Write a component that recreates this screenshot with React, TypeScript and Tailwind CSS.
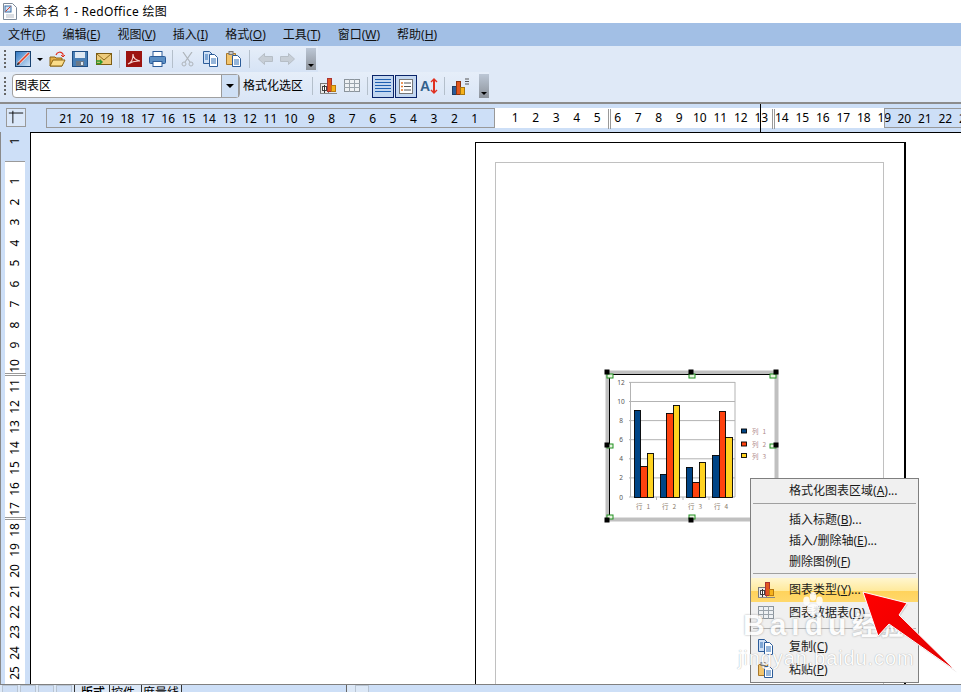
const menus = [
  ["文件", "F"],
  ["编辑", "E"],
  ["视图", "V"],
  ["插入", "I"],
  ["格式", "O"],
  ["工具", "T"],
  ["窗口", "W"],
  ["帮助", "H"],
];

const leftNums = Array.from({ length: 21 }, (_, i) => 21 - i);
const midNums = Array.from({ length: 19 }, (_, i) => i + 1);
const rightNums = [20, 21, 22, 23];
const sideNums = Array.from({ length: 25 }, (_, i) => i + 1);

// bars in screen coordinates: x, width, top
const bars = [
  [634, 6, 410, "#004586"], [640, 7, 466, "#ff420e"], [647, 6, 453, "#ffd320"],
  [660, 6, 474, "#004586"], [666, 7, 413, "#ff420e"], [673, 6, 405, "#ffd320"],
  [686, 6, 467, "#004586"], [692, 7, 482, "#ff420e"], [699, 6, 462, "#ffd320"],
  [712, 7, 455, "#004586"], [719, 6, 411, "#ff420e"], [725, 7, 437, "#ffd320"],
] as const;

function Grip() {
  return <div className="ml-1 h-[18px] w-[2px] shrink-0 border-l-2 border-dotted border-[#666]" />;
}

function Sep({ className }: { className: string }) {
  return <div className={`h-[18px] w-px shrink-0 bg-[#b4bfcb] ${className}`} />;
}

function Overflow({ className }: { className: string }) {
  return (
    <div className={`flex w-[10px] shrink-0 items-end justify-center bg-linear-to-b from-[#bcc7d6] to-[#8d939b] pb-[3px] ${className}`}>
      <div className="h-0 w-0 border-x-[3px] border-t-[3px] border-x-transparent border-t-black" />
    </div>
  );
}

function ChartTypeIcon({ className = "" }: { className?: string }) {
  return (
    <svg viewBox="0 0 17 17" className={`h-[17px] w-[17px] shrink-0 ${className}`}>
      <rect x="0.5" y="5.5" width="8" height="10" fill="#e8e8e8" stroke="#777" />
      <rect x="2.5" y="8.5" width="4" height="4" fill="#fff" stroke="#444" />
      <path d="M4.5 7v8" stroke="#333" />
      <rect x="7.5" y="0.5" width="4" height="13" fill="#e2571e" stroke="#a33" />
      <rect x="11.5" y="7.5" width="4" height="6" fill="#f6b21b" stroke="#b87a10" />
      <path d="M0 15.5h17" stroke="#888" />
    </svg>
  );
}

function TableIcon({ className = "" }: { className?: string }) {
  return (
    <svg viewBox="0 0 16 14" className={`h-[14px] w-4 shrink-0 ${className}`}>
      <rect x="0.5" y="0.5" width="15" height="12" fill="#eef1f4" stroke="#8b949c" />
      <path d="M0 4.5h16M0 8.5h16M5.5 0v13M10.5 0v13" stroke="#9aa3ab" />
    </svg>
  );
}

function CopyIcon({ className = "" }: { className?: string }) {
  return (
    <svg viewBox="0 0 16 16" className={`h-4 w-4 shrink-0 ${className}`}>
      <path d="M0.5 0.5h6l3 3v9h-9z" fill="#cfe0f5" stroke="#2c5c99" />
      <path d="M6.5 3.5h5l3 3v9h-8z" fill="#fff" stroke="#2c5c99" />
      <path d="M8 8h5M8 10h5M8 12h5M2 4h3M2 6h3M2 8h3" stroke="#2c6cb5" />
    </svg>
  );
}

function PasteIcon({ className = "" }: { className?: string }) {
  return (
    <svg viewBox="0 0 16 16" className={`h-4 w-4 shrink-0 ${className}`}>
      <path d="M0.5 2.5h9v11h-9z" fill="#f2c56e" stroke="#a8772a" />
      <rect x="3" y="0.5" width="4" height="3" fill="#c9c9c9" stroke="#777" />
      <path d="M6.5 4.5h5l3 3v8h-8z" fill="#fff" stroke="#2c5c99" />
      <path d="M8 9h5M8 11h5M8 13h5" stroke="#2c6cb5" />
    </svg>
  );
}

function DrawIcon() {
  return (
    <svg viewBox="0 0 16 16" className="ml-[9px] h-4 w-4 shrink-0">
      <defs>
        <linearGradient id="draw-fill" x1="0" y1="0" x2="1" y2="1">
          <stop offset="0" stopColor="#2f78c4" />
          <stop offset="1" stopColor="#d5e6f7" />
        </linearGradient>
      </defs>
      <rect x="0.5" y="0.5" width="15" height="15" fill="url(#draw-fill)" stroke="#17406f" />
      <path d="M3 13 14 2" stroke="#fbe3d8" strokeWidth="3" />
      <path d="M3 13 14 2" stroke="#e2402b" strokeWidth="1.6" />
      <path d="M1.500 14.500 3 11l2 2z" fill="#333" />
    </svg>
  );
}

function OpenIcon() {
  return (
    <svg viewBox="0 0 17 17" className="ml-[6px] h-[17px] w-[17px] shrink-0">
      <path d="M1 6h5l1 1h6v8H1z" fill="#e6b04a" stroke="#8a6414" />
      <path d="M1 15 4 9h12l-3 6z" fill="#fbdd8a" stroke="#8a6414" />
      <path d="M7 4c1-3 5-4 7-1v2" fill="none" stroke="#e03020" strokeWidth="1.2" />
      <path d="m12 4 2 2 2-2" fill="none" stroke="#e03020" />
    </svg>
  );
}

function SaveIcon() {
  return (
    <svg viewBox="0 0 16 16" className="ml-[6px] h-4 w-4 shrink-0">
      <rect x="0.5" y="0.5" width="15" height="15" fill="#4a7fb5" stroke="#1f4f85" />
      <rect x="3" y="1" width="10" height="6" fill="#dfe9f3" />
      <rect x="4" y="10" width="8" height="5" fill="#6d7a88" />
      <rect x="9" y="11" width="2" height="3" fill="#dfe9f3" />
    </svg>
  );
}

function MailIcon() {
  return (
    <svg viewBox="0 0 16 14" className="ml-[8px] h-[14px] w-4 shrink-0">
      <rect x="0.5" y="1.5" width="15" height="11" fill="#edcb7c" stroke="#7d5d14" />
      <path d="m1 2 7 6 7-6" fill="none" stroke="#8f6c1b" />
      <path d="M0 9h5M0 11.5h5" stroke="#2f9a2f" strokeWidth="1.5" />
      <path d="m4 7 3 3-3 3z" fill="#2f9a2f" />
    </svg>
  );
}

function PdfIcon() {
  return (
    <svg viewBox="0 0 16 16" className="ml-[6px] h-4 w-4 shrink-0">
      <rect width="16" height="16" fill="#9c1410" />
      <path d="M2 13c3-1 5-5 5-10 0 4 2 6 7 7-4-.3-8 .5-12 3z" fill="none" stroke="#f6d5d0" strokeWidth="1.1" />
    </svg>
  );
}

function PrintIcon() {
  return (
    <svg viewBox="0 0 17 16" className="ml-[7px] h-4 w-[17px] shrink-0">
      <rect x="4" y="0.5" width="9" height="5" fill="#fff" stroke="#2c5c99" />
      <rect x="0.5" y="5.5" width="16" height="7" rx="1" fill="#5c8fc4" stroke="#2c5c99" />
      <rect x="4" y="10.5" width="9" height="5" fill="#fff" stroke="#2c5c99" />
    </svg>
  );
}

function CutIcon() {
  return (
    <svg viewBox="0 0 13 15" className="ml-[8px] h-[15px] w-[13px] shrink-0">
      <path d="M2 0l7 10M11 0 4 10" stroke="#aeb4ba" strokeWidth="1.2" />
      <circle cx="3" cy="12" r="2" fill="none" stroke="#aeb4ba" />
      <circle cx="10" cy="12" r="2" fill="none" stroke="#aeb4ba" />
    </svg>
  );
}

function ArrowIcon({ flip, className }: { flip?: boolean; className: string }) {
  return (
    <svg viewBox="0 0 15 12" className={`h-3 w-[15px] shrink-0 ${flip ? "-scale-x-100" : ""} ${className}`}>
      <path d="M0.5 6 6.5 0.5v3h8v5h-8v3z" fill="#c7ced6" stroke="#b6bec6" />
    </svg>
  );
}

function LinesIcon() {
  return (
    <svg viewBox="0 0 16 14" className="h-[14px] w-4">
      <path d="M0 .5h16M0 3.5h16M0 6.5h16M0 9.5h16M0 12.5h16" stroke="#1f5fb0" />
    </svg>
  );
}

function ListIcon() {
  return (
    <svg viewBox="0 0 14 15" className="h-[15px] w-[14px]">
      <rect x="0.5" y="0.5" width="13" height="14" fill="#fff" stroke="#777" />
      <path d="M2 4h2M2 7.500h2M2 11h2" stroke="#e2762a" strokeWidth="1.4" />
      <path d="M5 4h7M5 7.500h7M5 11h7" stroke="#555" />
    </svg>
  );
}

function TextAxisIcon() {
  return (
    <svg viewBox="0 0 18 16" className="ml-[3px] h-4 w-[18px] shrink-0">
      <text x="0" y="13" fontSize="14" fontWeight="700" fill="#34618c" fontFamily="Liberation Sans">A</text>
      <path d="M14 1v14" stroke="#e03020" strokeWidth="2" />
      <path d="m11 4 3-3 3 3M11 12l3 3 3-3" fill="none" stroke="#e03020" strokeWidth="1.4" />
    </svg>
  );
}

function BarsIcon() {
  return (
    <svg viewBox="0 0 17 17" className="ml-[7px] h-[17px] w-[17px] shrink-0">
      <rect x="0.5" y="8.5" width="4" height="8" fill="#2c5c99" stroke="#1f3f66" />
      <rect x="4.500" y="3.500" width="4" height="13" fill="#e2571e" stroke="#8e3410" />
      <rect x="8.500" y="9.500" width="4" height="7" fill="#f6b21b" stroke="#a8760e" />
      <path d="M13 1h4M13 3.500h4M13 6h4" stroke="#555" />
    </svg>
  );
}

function SideRuler() {
  return (
    <div className="relative flex w-[30px] shrink-0 justify-center border-l border-[#8a8a8a] bg-[#cddff7] pr-[1px]">
      <div className="w-5 bg-white">
        <div className="flex h-[30px] items-start justify-center border-b border-[#9a9a9a] bg-[#cddff7] pt-px">
          <span className="-rotate-90 text-xs">1</span>
        </div>
        <div className="pt-[9px]">
          {sideNums.map((n) => (
            <div key={n} className="flex h-[20.5px] items-center justify-center">
              <span className="-rotate-90 text-xs">{n}</span>
            </div>
          ))}
        </div>
      </div>
      <div className="absolute left-[4px] top-[241px] h-[3px] w-[21px] border-y border-[#999]" />
      <div className="absolute left-[4px] top-[385px] h-[3px] w-[21px] border-y border-[#999]" />
    </div>
  );
}

function TopRuler() {
  return (
    <div className="relative flex h-[30px] shrink-0 items-center border-t-2 border-[#8c8c8c] bg-[#cddff7] pb-[1px]">
      <svg viewBox="0 0 20 19" className="ml-[6px] h-[19px] w-5 shrink-0 border border-[#999] bg-[#dbe8f9]">
        <path d="M6.500 2v14M2 4.500h16" stroke="#000" />
      </svg>
      <div className="ml-5 flex h-5 w-[449px] shrink-0 justify-end border border-[#999] pr-[9px] text-xs leading-5">
        {leftNums.map((n) => (
          <span key={n} className="w-[20.45px] shrink-0 text-center">{n}</span>
        ))}
      </div>
      <div className="flex h-5 w-[389px] shrink-0 bg-white pl-[10px] text-xs leading-5">
        {midNums.map((n) => (
          <span key={n} className="w-[20.5px] shrink-0 text-center">{n}</span>
        ))}
      </div>
      <div className="flex h-5 flex-1 border border-r-0 border-[#999] pl-[9px] text-xs leading-5">
        {rightNums.map((n) => (
          <span key={n} className="w-[20.5px] shrink-0 text-center">{n}</span>
        ))}
      </div>
      <div className="absolute left-[608px] top-[5px] h-5 w-[3px] border-x border-[#999]" />
      <div className="absolute left-[772px] top-[5px] h-5 w-[3px] border-x border-[#999]" />
      <div className="absolute left-[760px] top-0 h-[28px] w-px bg-black" />
    </div>
  );
}

function ChartObject() {
  const ticks = [0, 2, 4, 6, 8, 10, 12];
  const handles = [[610, 376], [692, 376], [773, 376], [610, 446], [773, 446], [610, 517], [692, 517]];
  const black = [[607, 372], [691, 372], [776, 372], [607, 445], [776, 445], [607, 520], [691, 520]];
  return (
    <svg viewBox="600 367 180 160" className="ml-[104px] mt-[204px] h-[160px] w-[180px]">
      <rect x="607.500" y="372.500" width="169" height="147" fill="#fff" stroke="#c0c0c0" strokeWidth="4" />
      <path d="M609.500 519V374.500H775" fill="none" stroke="#000" />
      {ticks.map((t) => {
        const y = 497 - t * 9.55;
        return (
          <g key={t}>
            <path d={`M629 ${y}H735`} stroke="#b3b3b3" />
            <text x="621" y={y + 2.500} fontSize="6.500" textAnchor="middle" fill="#555">{t}</text>
          </g>
        );
      })}
      <path d="M630.500 382v115M735 382v115M656.500 497v3M683 497v3M709 497v3" stroke="#b3b3b3" />
      {bars.map(([x, w, top, fill]) => (
        <rect key={x} x={x + 0.5} y={top + 0.5} width={w} height={497 - top} fill={fill} stroke="#000" strokeWidth="0.9" />
      ))}
      {["行 1", "行 2", "行 3", "行 4"].map((t, i) => (
        <text key={t} x={643 + i * 26} y="509" fontSize="6.500" wordSpacing="2.500" textAnchor="middle" fill="#8a7a6a" fontFamily="Noto Sans CJK SC">{t}</text>
      ))}
      {[["#004586", 429, "列 1"], ["#ff420e", 442, "列 2"], ["#ffd320", 453.500, "列 3"]].map(([c, y, t]) => (
        <g key={t as string}>
          <rect x="741.500" y={y as number} width="5" height="4" fill={c as string} stroke="#000" strokeWidth="0.9" />
          <text x="752" y={(y as number) + 5} fontSize="6.500" wordSpacing="2.500" fill="#b08a8a" fontFamily="Noto Sans CJK SC">{t as string}</text>
        </g>
      ))}
      {handles.map(([x, y]) => (
        <rect key={`${x}-${y}`} x={x - 3} y={y - 2} width="6" height="4" fill="#e8f5e0" stroke="#1f8f1f" />
      ))}
      {black.map(([x, y]) => (
        <rect key={`${x}-${y}`} x={x - 2.5} y={y - 2.5} width="5" height="5" fill="#000" />
      ))}
    </svg>
  );
}

function MenuLine({ k, label, after = "", className = "h-[21px]", icon }: { k: string; label: string; after?: string; className?: string; icon?: React.ReactNode }) {
  return (
    <div className={`flex items-center text-xs text-[#1a1a1a] ${className}`}>
      <div className="flex w-[38px] shrink-0 justify-center pr-[8px]">{icon}</div>
      <span>
        {label}(<u>{k}</u>){after}
      </span>
    </div>
  );
}

function ContextMenu() {
  return (
    <div className="absolute left-[750px] top-[478px] w-[169px] border border-[#7f7f7f] bg-[#f0f0f0] pt-[1px]">
      <MenuLine label="格式化图表区域" k="A" after="..." />
      <div className="mx-[2px] my-[2px] h-px bg-[#a0a0a0]" />
      <div className="h-[3px]" />
      <MenuLine label="插入标题" k="B" after="..." />
      <MenuLine label="插入/删除轴" k="E" after="..." />
      <MenuLine label="删除图例" k="F" />
      <div className="mx-[2px] my-[1px] h-px bg-[#a0a0a0]" />
      <div className="h-[3px]" />
      <MenuLine
        label="图表类型"
        k="Y"
        after="..."
        className="h-6 bg-[linear-gradient(#fff6cf,#ffe99a_55%,#ffd35c_56%,#ffd86c)]"
        icon={<ChartTypeIcon />}
      />
      <MenuLine label="图表数据表" k="D" className="h-[22px]" icon={<TableIcon />} />
      <div className="mx-[2px] my-[4px] h-px bg-[#b0b0b0]" />
      <div className="h-[3px]" />
      <MenuLine label="复制" k="C" icon={<CopyIcon />} />
      <MenuLine label="粘贴" k="P" className="h-[25px]" icon={<PasteIcon />} />
    </div>
  );
}

function BottomTabs() {
  return (
    <div className="flex h-2 shrink-0 border-t border-[#808080] bg-[#dce8f7] pl-[2px]">
      {[0, 1, 2, 3].map((i) => (
        <div key={i} className="mr-[2px] h-[12px] w-4 shrink-0 border border-[#b8c4d2] bg-[#cfdff5]" />
      ))}
      <div className="flex items-start text-xs leading-4">
        <span className="w-[35px] shrink-0 border-l border-[#333] pl-[6px] font-medium">版式</span>
        <span className="w-[32px] shrink-0 border-l border-[#333] pl-[1px]">控件</span>
        <span className="w-[41px] shrink-0 border-x border-[#333] pl-px">度量线</span>
      </div>
      <div className="w-[165px] shrink-0 border-r border-[#666] bg-[#cddff7]" />
      <div className="ml-[8px] h-3 w-[14px] shrink-0 border border-[#b8c4d2] bg-[#dce8f7]" />
      <div className="flex-1 bg-[#cddff7]" />
    </div>
  );
}

function Watermark() {
  return (
    <div className="pointer-events-none absolute left-[743px] top-[592px] w-[175px] text-white">
      <svg viewBox="0 0 24 22" className="ml-[57px] h-[24px] w-[26px] opacity-85">
        <ellipse cx="6" cy="8" rx="3" ry="4" fill="#fff" />
        <ellipse cx="12" cy="4" rx="3" ry="4" fill="#fff" />
        <ellipse cx="18" cy="8" rx="3" ry="4" fill="#fff" />
        <ellipse cx="12" cy="16" rx="6" ry="5" fill="#fff" />
      </svg>
      <div className="-mt-[8px] flex items-center whitespace-nowrap opacity-85 [text-shadow:0_0_2px_#8a8a8a]">
        <span className="w-[109px] shrink-0 font-['Liberation_Sans',sans-serif] text-[30px] font-bold leading-[34px] tracking-[5px]">Baidu</span>
        <span className="text-[26px] font-bold leading-[34px]">经验</span>
      </div>
      <div className="-ml-[5px] mt-[6px] whitespace-nowrap font-['Liberation_Sans',sans-serif] text-[20px] leading-5 tracking-[0.9px] opacity-85 [text-shadow:0_0_1px_#8a8a8a]">
        jingyan.baidu.com
      </div>
    </div>
  );
}

function RedArrow() {
  return (
    <svg viewBox="855 585 106 95" className="pointer-events-none absolute left-[855px] top-[585px] h-[95px] w-[106px]">
      <defs>
        <linearGradient id="arrow-fill" x1="0" y1="0" x2="1" y2="1">
          <stop offset="0" stopColor="#ff0000" />
          <stop offset="1" stopColor="#e00000" />
        </linearGradient>
      </defs>
      <path d="M863 592 907 603 899 615 956 671 889 624 878 636z" fill="#b8b8b8" opacity="0.5" transform="translate(1 1.500)" />
      <path d="M863 592 907 603 899 615 956 671 889 624 878 636z" fill="url(#arrow-fill)" stroke="#fff" strokeWidth="1" />
    </svg>
  );
}

export default function App() {
  return (
    <div className="relative flex h-[692px] w-full flex-col overflow-hidden bg-white font-['Noto_Sans','Noto_Sans_CJK_SC',sans-serif] text-black">
      {/* title bar */}
      <div className="flex h-[23px] shrink-0 items-center pl-[3px] text-xs">
        <svg viewBox="0 0 14 17" className="h-[17px] w-[14px] shrink-0">
          <path d="M0.5 0.5h9l4 4v12h-13z" fill="#fff" stroke="#7d8a99" />
          <rect x="2" y="3" width="6" height="6" fill="#cfe2f6" stroke="#3a6ea5" />
          <path d="M2.500 8.500 7.500 3.500" stroke="#d8402b" />
          <path d="M3 12h8M3 14h8" stroke="#b5bcc5" />
        </svg>
        <span className="ml-[6px] tracking-[0.3px]">未命名 1 - RedOffice 绘图</span>
      </div>

      {/* menu bar */}
      <div className="flex h-[23px] shrink-0 items-center gap-[17px] bg-[#a2bfe5] pl-2 text-xs text-[#111]">
        {menus.map(([label, key]) => (
          <span key={key}>
            {label}(<u>{key}</u>)
          </span>
        ))}
      </div>

      {/* toolbars */}
      <div className="shrink-0 bg-[#dfe9f7]">
        <div className="flex h-[26px] w-[318px] items-center bg-linear-to-b from-[#e6eef9] to-[#d6e3f5]">
          <Grip />
          <DrawIcon />
          <div className="ml-[6px] h-0 w-0 shrink-0 border-x-[3px] border-t-[3px] border-x-transparent border-t-black" />
          <OpenIcon />
          <SaveIcon />
          <MailIcon />
          <Sep className="ml-[7px]" />
          <PdfIcon />
          <PrintIcon />
          <Sep className="ml-[6px]" />
          <CutIcon />
          <CopyIcon className="ml-[9px]" />
          <PasteIcon className="ml-[7px]" />
          <Sep className="ml-[7px]" />
          <ArrowIcon className="ml-[8px]" />
          <ArrowIcon flip className="ml-[7px]" />
          <Overflow className="ml-[11px] h-[22px]" />
        </div>
        <div className="flex h-[30px] w-[489px] items-center bg-linear-to-b from-[#e6eef9] to-[#d9e5f6] pb-[2px]">
          <Grip />
          <div className="ml-[6px] flex h-[24px] w-[228px] shrink-0 items-center justify-between rounded-sm border border-[#a0a0a0] bg-white pl-[2px] text-xs">
            <span>图表区</span>
            <div className="flex h-[22px] w-[18px] items-center justify-center border-x border-[#9a9a9a] bg-[#cfe0f5]">
              <div className="h-0 w-0 border-x-[4px] border-t-[4px] border-x-transparent border-t-black" />
            </div>
          </div>
          <span className="ml-[3px] w-[60px] shrink-0 text-xs">格式化选区</span>
          <Sep className="ml-[9px]" />
          <ChartTypeIcon className="ml-[7px]" />
          <TableIcon className="ml-[7px]" />
          <Sep className="ml-[7px]" />
          <div className="ml-[4px] flex h-[23px] w-[22px] shrink-0 items-center justify-center border border-[#0a246a] bg-[#c3d7f0]">
            <LinesIcon />
          </div>
          <div className="ml-px flex h-[23px] w-[22px] shrink-0 items-center justify-center border border-[#0a246a] bg-[#c3d7f0]">
            <ListIcon />
          </div>
          <TextAxisIcon />
          <Sep className="ml-[6px]" />
          <BarsIcon />
          <Overflow className="ml-[10px] h-[24px]" />
        </div>
      </div>

      <TopRuler />

      {/* work area */}
      <div className="flex min-h-0 flex-1">
        <SideRuler />
        <div className="min-w-0 flex-1 overflow-hidden border-l border-t border-black bg-white pl-[444px] pt-[9px]">
          <div className="h-[700px] w-[431px] border border-r-2 border-black pl-[19px] pt-[19px]">
            <div className="h-[680px] w-[389px] border border-[#c0c0c0]">
              <ChartObject />
            </div>
          </div>
        </div>
      </div>

      <BottomTabs />

      <ContextMenu />
      <Watermark />
      <RedArrow />
    </div>
  );
}
